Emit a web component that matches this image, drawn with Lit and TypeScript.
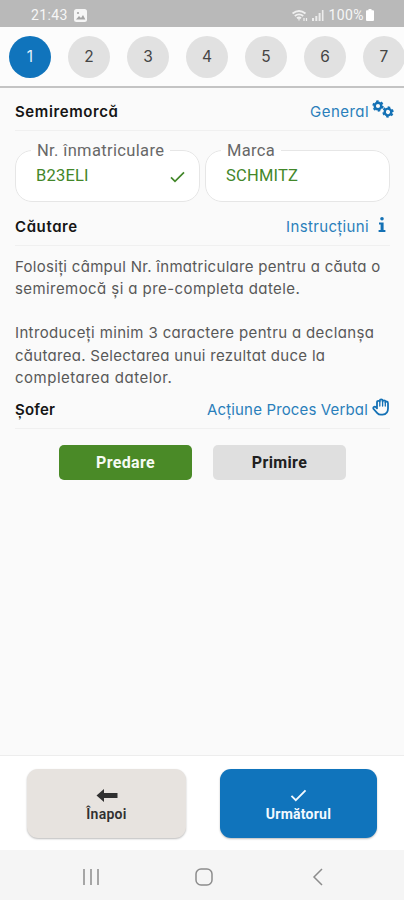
import { LitElement, html, css, svg } from "lit";
import { customElement, property } from "lit/decorators.js";
import { classMap } from "lit/directives/class-map.js";

const gear = (x: number, y: number, r: number, turn: number) => svg`
  <g transform="translate(${x} ${y}) rotate(${turn})" fill="none" stroke="currentColor">
    <circle r=${r * 0.62} stroke-width=${r * 0.46} />
    <circle r=${r * 0.9} stroke-width=${r * 0.34} stroke-dasharray="${r * 0.47} ${r * 0.4725}" />
  </g>`;

const gearsIcon = html`<svg width="22" height="20" viewBox="0 0 22 20">
  ${gear(6, 6, 5.3, 0)}${gear(16, 12, 5.3, 20)}
</svg>`;

const infoIcon = html`<svg width="8" height="18" viewBox="0 0 8 18" fill="currentColor">
  <circle cx="4" cy="2.8" r="1.8" />
  <path d="M1 6.5h4.6v7.5H7.4v2H.6v-2h2V8.5H1z" />
</svg>`;

const handIcon = html`<svg width="18" height="19" viewBox="0 0 18 19" fill="none" stroke="currentColor"
  stroke-width="1.8" stroke-linecap="round" stroke-linejoin="round">
  <path d="M5 9.4V4.4q0-1.6 1.4-1.6T7.8 3.4V2.8Q7.8 1.4 9.2 1.4t1.4 1.4v.6q0-1 1.4-1t1.4 1.2v.7q0-.8 1.3-.8T16 5.2v5.4q0 2.6-1.2 4-1.4 2.1-4.3 2.1H8.9q-2.2 0-3.6-1.6L1.6 11Q.9 9.7 1.9 9t2 .2L5 10.4" />
  <path d="M7.8 4v4M10.6 4v4M13.3 4.6V8" stroke-width="1.3" />
</svg>`;

const check = (w: number, h: number) => html`<svg width=${w} height=${h} viewBox="0 0 15 12" fill="none"
  stroke="currentColor" stroke-width="1.7"><path d="M1 6.4 5 10.4 14 1.3" /></svg>`;

@customElement("step-bar")
export class StepBar extends LitElement {
  @property({ type: Number }) current = 1;

  static styles = css`
    :host {
      display: flex;
      flex: none;
      box-sizing: border-box;
      height: 61px;
      padding: 9px 0 0 9px;
      gap: 17px;
      overflow: hidden;
      background: #fcfcfc;
      border-bottom: 2px solid #c4c4c4;
    }
    .step {
      flex: none;
      width: 42px;
      height: 42px;
      border-radius: 50%;
      background: #e1e1e1;
      color: #454545;
      font: 15.5px/41px Inter, sans-serif;
      text-align: center;
    }
    .active {
      background: #1074bc;
      color: #e4f2fc;
    }
  `;

  render() {
    return [1, 2, 3, 4, 5, 6, 7].map(
      (n) => html`<div class=${classMap({ step: true, active: n === this.current })}>${n}</div>`,
    );
  }
}

@customElement("section-head")
export class SectionHead extends LitElement {
  @property() name = "";
  @property() action = "";
  @property() kind = "";

  static styles = css`
    :host {
      display: flex;
      box-sizing: border-box;
      height: 38px;
      align-items: center;
      border-bottom: 1px solid #f0f0f0;
      font: 15px/22px Inter, sans-serif;
      font-feature-settings: "cv11", "ss03";
      white-space: nowrap;
    }
    b {
      flex: 1;
      color: #151515;
      font-weight: 600;
      letter-spacing: 0.6px;
    }
    .hand-title { letter-spacing: 0.2px; }
    .link {
      display: flex;
      align-items: center;
      color: #2a7fbb;
    }
    .gears .text { letter-spacing: 0.45px; }
    .info .text { letter-spacing: 0.35px; }
    .hand .text { letter-spacing: 0.15px; }
    svg {
      display: block;
      color: #1471b5;
    }
    .gears svg { margin: -3px -4px 0 3px; }
    .info svg { margin: -3px 4px 0 9px; }
    .hand svg { margin: -4px 0 0 4px; }
  `;

  render() {
    const icon = { gears: gearsIcon, info: infoIcon, hand: handIcon }[this.kind];
    return html`<b class="${this.kind}-title">${this.name}</b
      ><span class="link ${this.kind}"><span class="text">${this.action}</span>${icon}</span>`;
  }
}

@customElement("text-field")
export class TextField extends LitElement {
  @property() label = "";
  @property() value = "";
  @property({ type: Boolean }) valid = false;

  static styles = css`
    :host {
      display: block;
      flex: 1;
      font-family: Roboto, sans-serif;
    }
    fieldset {
      display: flex;
      box-sizing: border-box;
      height: 62px;
      margin: 0;
      padding: 0 14px 9px 20px;
      min-width: 0;
      border: 1px solid #e6e6e6;
      border-radius: 17px;
      align-items: center;
      justify-content: space-between;
      background: #fff;
    }
    legend {
      margin-left: -5px;
      padding: 0 6px;
      height: 20px;
      line-height: 21px;
      font-size: 16.5px;
      letter-spacing: 0.35px;
      color: #686868;
      background: linear-gradient(#fafafa 50%, #fff 50%);
    }
    .value {
      font-size: 16.5px;
      line-height: 22px;
      letter-spacing: 0.2px;
      color: #43872a;
    }
    svg { color: #43872a; margin-top: 1px; }
  `;

  render() {
    return html`<fieldset>
      <legend>${this.label}</legend>
      <span class="value">${this.value}</span>${this.valid ? check(15, 12) : ""}
    </fieldset>`;
  }
}

@customElement("app-root")
export class AppRoot extends LitElement {
  static styles = css`
    :host {
      display: flex;
      flex-direction: column;
      height: 900px;
      overflow: hidden;
      background: #fafafa;
      font-family: Roboto, sans-serif;
    }
    .status {
      display: flex;
      flex: none;
      box-sizing: border-box;
      height: 27px;
      padding: 3px 30px 0 31px;
      align-items: center;
      background: #b9b9b9;
      color: #f6f6f6;
      font-size: 14px;
      letter-spacing: 0.4px;
    }
    .status svg { display: block; }
    .photo { margin-left: 6px; }
    .wifi { margin-left: auto; }
    .signal { margin: 0 5px 0 4px; }
    .battery { margin-left: 2px; }
    main {
      flex: 1;
      padding: 5px 14px 0 15px;
    }
    .fields {
      display: flex;
      gap: 5px;
      margin: 9px 0 6px;
    }
    .help {
      margin: 10px 0 2px;
      font: 15px/22.2px Inter, sans-serif;
      font-feature-settings: "cv11", "ss03";
      color: #585858;
      white-space: nowrap;
    }
    .line {
      display: block;
      letter-spacing: 0.29px;
    }
    .loose { letter-spacing: 0.42px; }
    .wide { letter-spacing: 0.5px; }
    .gap {
      margin-top: 22px;
      letter-spacing: 0.36px;
    }
    .choices {
      display: flex;
      justify-content: center;
      gap: 21px;
      margin-top: 16px;
    }
    .choice {
      width: 133px;
      height: 35px;
      border-radius: 5px;
      background: #dfdfdf;
      color: #202020;
      font-size: 16px;
      font-weight: 700;
      line-height: 35px;
      text-align: center;
      letter-spacing: 0.35px;
    }
    .chosen {
      background: #4a8a27;
      color: #f6fbf3;
    }
    footer {
      display: flex;
      flex: none;
      box-sizing: border-box;
      height: 95px;
      padding: 13px 27px 0;
      justify-content: space-between;
      background: #fff;
      border-top: 1px solid #ededed;
    }
    .big {
      display: flex;
      flex-direction: column;
      box-sizing: border-box;
      width: 159px;
      height: 69px;
      padding-top: 19px;
      align-items: center;
      border-radius: 11px;
      background: #e7e3df;
      color: #303030;
      box-shadow: 0 1px 2px #0004;
      font-size: 14px;
      font-weight: 600;
      line-height: 18px;
      letter-spacing: 0.25px;
    }
    .big svg { display: block; height: 16px; margin-bottom: 1px; }
    .big .tick { display: flex; height: 17px; }
    .big .tick svg { height: 13px; margin: 1px 0 0; }
    .next {
      width: 157px;
      background: #1074bc;
      color: #f2f9ff;
      font-weight: 700;
    }
    nav {
      display: flex;
      flex: none;
      height: 50px;
      padding: 3px 76px 0 80px;
      box-sizing: border-box;
      align-items: center;
      justify-content: space-between;
      background: #f5f5f5;
    }
  `;

  render() {
    return html`
      <div class="status">
        <span class="time">21:43</span>
        <svg class="photo" width="13" height="13" viewBox="0 0 13 13">
          <rect width="13" height="13" rx="2.5" fill="#f6f6f6" />
          <path d="M2 10.5 5 7l2 2 2-3 2.4 4.5z" fill="#a5a5a5" /><circle cx="4" cy="4" r="1.1" fill="#a5a5a5" />
        </svg>
        <svg class="wifi" width="16" height="13" viewBox="0 0 16 13" fill="none" stroke="#f0f0f0" stroke-width="1.9">
          <path d="M.5 4.5q6.5-5 13 0M2.8 7q4.2-3.2 8.4 0M5 9.3q2-1.6 4 0" /><path d="M7 9v2.5M12 9v3M14.5 9v3" stroke-width="1.2" />
        </svg>
        <svg class="signal" width="12" height="12" viewBox="0 0 12 12" fill="#ececec">
          <path d="M0 9h2v3H0zM3.3 7h2v5h-2zM6.6 4h2v8h-2zM9.9 1h1.6v11H9.9z" />
        </svg>
        <span class="percent">100%</span>
        <svg class="battery" width="8" height="12" viewBox="0 0 8 12" fill="#fff">
          <path d="M2.5 0h3v1.3H7q1 0 1 1V11q0 1-1 1H1q-1 0-1-1V2.3q0-1 1-1h1.5z" />
        </svg>
      </div>
      <step-bar current="1"></step-bar>
      <main>
        <section-head name="Semiremorcă" action="General" kind="gears"></section-head>
        <div class="fields">
          <text-field label="Nr. înmatriculare" value="B23ELI" valid></text-field>
          <text-field label="Marca" value="SCHMITZ"></text-field>
        </div>
        <section-head name="Căutare" action="Instrucțiuni" kind="info"></section-head>
        <div class="help">
          <span class="line">Folosiți câmpul Nr. înmatriculare pentru a căuta o</span>
          <span class="line loose">semiremocă și a pre-completa datele.</span>
          <span class="line gap">Introduceți minim 3 caractere pentru a declanșa</span>
          <span class="line">căutarea. Selectarea unui rezultat duce la</span>
          <span class="line wide">completarea datelor.</span>
        </div>
        <section-head name="Șofer" action="Acțiune Proces Verbal" kind="hand"></section-head>
        <div class="choices">
          <div class="choice chosen">Predare</div>
          <div class="choice">Primire</div>
        </div>
      </main>
      <footer>
        <div class="big">
          <svg width="22" viewBox="0 0 22 16" fill="currentColor">
            <path d="M.5 7.5 8 1v4h13.5v5H8v4z" />
          </svg>
          Înapoi
        </div>
        <div class="big next"><span class="tick">${check(17, 13)}</span>Următorul</div>
      </footer>
      <nav>
        <svg width="22" height="18" viewBox="0 0 22 18" stroke="#8c8c8c" stroke-width="1.5">
          <path d="M4 1v16M11 1v16M18 1v16" />
        </svg>
        <svg width="18" height="18" viewBox="0 0 18 18" fill="none" stroke="#8c8c8c" stroke-width="1.5">
          <rect x="1" y="1" width="16" height="16" rx="5" />
        </svg>
        <svg width="22" height="18" viewBox="0 0 22 18" fill="none" stroke="#8c8c8c" stroke-width="1.5">
          <path d="M16 1 8 9l8 8" />
        </svg>
      </nav>
    `;
  }
}
